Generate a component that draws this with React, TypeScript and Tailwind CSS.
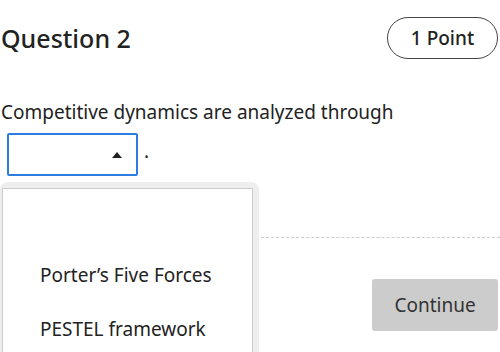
export default function App() {
  return (
    <main className="relative h-[352px] w-[500px] overflow-hidden bg-white font-['Noto_Sans',sans-serif] text-[#222]">
      {/* Header */}
      <div className="flex items-center justify-between pl-[1px] pr-[2px] pt-[17px]">
        <h2 className="text-[25px] font-medium leading-[36px]">Question 2</h2>
        <div className="flex h-[42px] w-[111px] items-center justify-center rounded-full border border-[#444] text-[19px] font-medium">
          1 Point
        </div>
      </div>

      {/* Question */}
      <p className="mt-[39px] pl-[1px] text-[19px] leading-[28px]">
        Competitive dynamics are analyzed through
      </p>
      <div className="mt-[7px] flex items-center">
        <div className="ml-[7px] flex h-[43px] w-[131px] items-center justify-end rounded-[2px] border-2 border-[#2b7de0] pr-[14px]">
          <svg width="10" height="6" viewBox="0 0 10 6">
            <path d="M5 0L10 6H0Z" fill="#222" />
          </svg>
        </div>
        <span className="mb-[8px] ml-[6px] text-[19px] leading-[28px]">.</span>
      </div>

      {/* Footer */}
      <div className="mt-[61px] border-t border-dashed border-[#ccc]" />
      <div className="mt-[41px] flex justify-end pr-[2px]">
        <button className="h-[52px] w-[126px] rounded-[3px] bg-[#ccc] text-[19px] text-[#333]">
          Continue
        </button>
      </div>

      {/* Dropdown list */}
      <div className="absolute left-0 top-[182px] w-[259px] rounded-t-lg bg-[#eee] pl-[2px] pr-[6px] pt-[6px]">
        <ul className="h-[180px] border border-[#ccc] bg-white pl-[37px] pt-[5px] text-[19px]">
          <li className="h-[54px] leading-[54px]"></li>
          <li className="h-[54px] leading-[54px]">Porter’s Five Forces</li>
          <li className="h-[54px] leading-[54px]">PESTEL framework</li>
        </ul>
      </div>
    </main>
  );
}
